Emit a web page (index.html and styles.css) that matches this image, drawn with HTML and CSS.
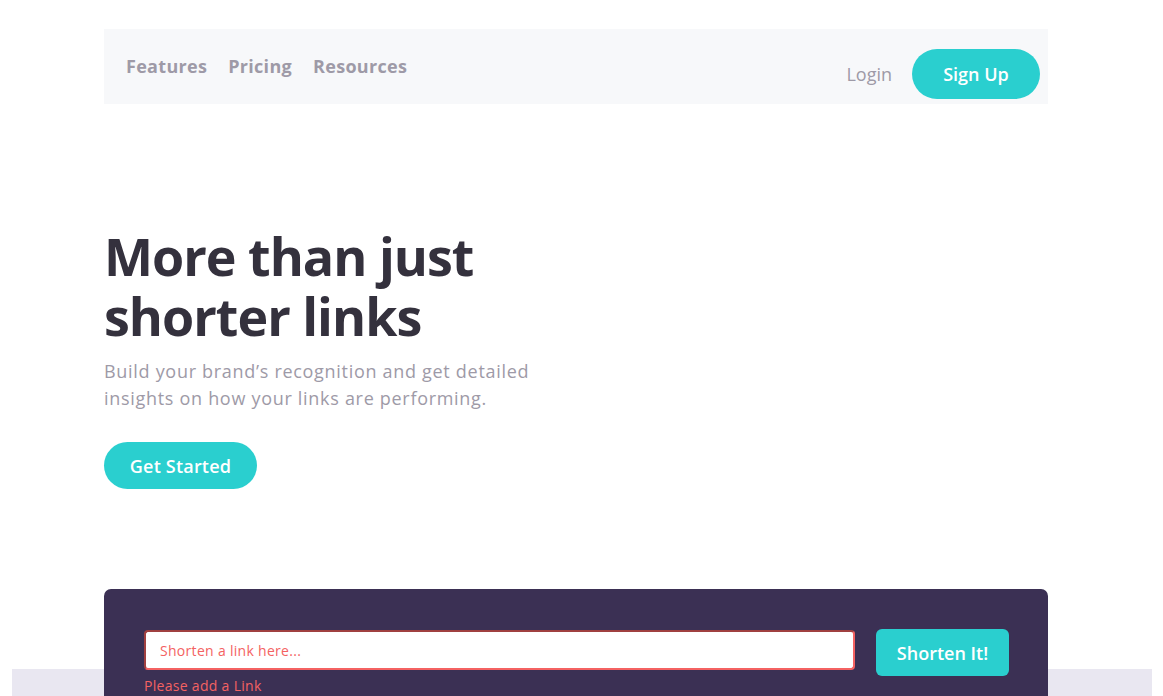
FILE: index.html
```html
<!DOCTYPE html>
<html lang="en">
<head>
<meta charset="utf-8">
<title>Shortly</title>
<link rel="stylesheet" href="styles.css">
</head>
<body>
<div class="page">
  <header class="nav">
    <nav class="nav-links">
      <a href="#" class="nav-link">Features</a>
      <a href="#" class="nav-link">Pricing</a>
      <a href="#" class="nav-link">Resources</a>
    </nav>
    <div class="nav-actions">
      <a href="#" class="login">Login</a>
      <a href="#" class="btn btn-signup">Sign Up</a>
    </div>
  </header>

  <section class="hero">
    <h1 class="hero-title">More than just<br>shorter links</h1>
    <p class="hero-text">Build your brand’s recognition and get detailed<br>insights on how your links are performing.</p>
    <a href="#" class="btn btn-start">Get Started</a>
  </section>

  <section class="shorten">
    <form class="shorten-form">
      <div class="field">
        <input class="shorten-input" type="text" placeholder="Shorten a link here...">
        <span class="error">Please add a Link</span>
      </div>
      <button type="button" class="btn-shorten">Shorten It!</button>
    </form>
  </section>
</div>
<div class="band"></div>
</body>
</html>
```

FILE: styles.css
```css
* { box-sizing: border-box; }

html, body {
  margin: 0;
  padding: 0;
  background: #fff;
  overflow: hidden;
}

body {
  font-family: "Open Sans", "Noto Sans", sans-serif;
  color: #34313d;
}

a { text-decoration: none; }

.page {
  width: 944px;
  margin-left: 104px;
  padding-top: 29px;
  position: relative;
  z-index: 1;
}

.nav {
  height: 75px;
  background: #f7f8fa;
  display: flex;
  justify-content: space-between;
  padding: 0 8px 0 22px;
}

.nav-links {
  display: flex;
  gap: 21px;
  align-items: center;
  padding-bottom: 1px;
}

.nav-link {
  font-size: 18px;
  font-weight: 700;
  color: #9e9aa7;
  letter-spacing: 0.3px;
}

.nav-actions {
  display: flex;
  align-items: center;
  gap: 20px;
  padding-top: 20px;
  padding-bottom: 5px;
}

.login {
  font-size: 18px;
  font-weight: 500;
  color: #9e9aa7;
}

.btn {
  display: inline-flex;
  align-items: center;
  justify-content: center;
  background: #2acfcf;
  color: #fff;
  font-size: 18px;
  font-weight: 600;
}

.btn-signup {
  width: 128px;
  height: 50px;
  border-radius: 25px;
}

.hero {
  padding-top: 122px;
}

.hero-title {
  margin: 0;
  font-size: 52px;
  line-height: 60px;
  font-weight: 700;
  color: #34313d;
  letter-spacing: -1px;
}

.hero-text {
  margin: 12px 0 0;
  font-size: 18px;
  line-height: 27px;
  color: #9e9aa7;
  font-weight: 500;
  letter-spacing: 0.7px;
}

.btn-start {
  margin-top: 30px;
  width: 153px;
  height: 47px;
  border-radius: 24px;
  letter-spacing: 0.2px;
}

.shorten {
  margin-top: 100px;
  background: #3b3054;
  border-radius: 7px;
  height: 170px;
  margin-bottom: -90px;
  padding: 40px 39px 0 40px;
}

.shorten-form {
  display: flex;
  gap: 21px;
  align-items: flex-start;
}

.field {
  flex: 1;
  display: flex;
  flex-direction: column;
  padding-top: 1px;
}

.shorten-input {
  height: 40px;
  width: 100%;
  border-width: 2px;
  border-style: inset;
  border-color: #f46262;
  border-radius: 4px;
  padding: 0 14px;
  font-family: inherit;
  font-size: 14px;
  letter-spacing: 0.3px;
  color: #34313d;
  background: #fff;
  outline: none;
}

.shorten-input::placeholder {
  color: #f46262;
  opacity: 1;
}

.error {
  margin-top: 6px;
  font-size: 14px;
  color: #f46262;
  line-height: 20px;
  letter-spacing: 0.3px;
}

.btn-shorten {
  width: 133px;
  height: 47px;
  border: none;
  border-radius: 6px;
  background: #2acfcf;
  color: #fff;
  font-family: inherit;
  font-size: 18px;
  font-weight: 600;
}

.band {
  height: 200px;
  margin: 0 11px 0 12px;
  background: #e9e7f1;
}
```
